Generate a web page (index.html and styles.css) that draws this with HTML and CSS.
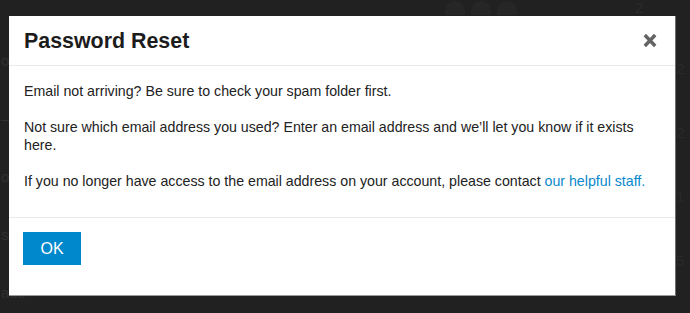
FILE: index.html
```html
<!DOCTYPE html>
<html lang="en">
<head>
<meta charset="utf-8">
<title>Password Reset</title>
<link rel="stylesheet" href="styles.css">
</head>
<body>
  <div class="backdrop">
    <div class="bg-left">
      <span class="bg-word">of</span>
      <span class="bg-word">–</span>
      <span class="bg-word">or</span>
      <span class="bg-word">so</span>
      <span class="bg-word">ads</span>
    </div>
    <div class="bg-top">
      <span class="bg-avatar"></span>
      <span class="bg-avatar"></span>
      <span class="bg-avatar"></span>
      <span class="bg-num">2</span>
    </div>
    <div class="bg-right">
      <span>2</span><span>2</span><span>1</span><span>5</span>
    </div>
  </div>

  <div class="modal" role="dialog" aria-labelledby="modal-title">
    <div class="modal-header">
      <h3 id="modal-title" class="modal-title">Password Reset</h3>
      <button class="modal-close" aria-label="close">
        <svg width="14" height="15" viewBox="0 0 14 15" aria-hidden="true">
          <path d="M1.8 2 L12.2 13 M12.2 2 L1.8 13" stroke="#646464" stroke-width="3.4" stroke-linecap="butt" fill="none"/>
        </svg>
      </button>
    </div>
    <div class="modal-body">
      <p>Email not arriving? Be sure to check your spam folder first.</p>
      <p>Not sure which email address you used? Enter an email address and we’ll let you know if it exists here.</p>
      <p>If you no longer have access to the email address on your account, please contact <a href="#" class="link">our helpful staff.</a></p>
    </div>
    <div class="modal-footer">
      <button class="btn-primary">OK</button>
    </div>
  </div>
</body>
</html>
```

FILE: styles.css
```css
html, body {
  margin: 0;
  padding: 0;
}

body {
  background: #212121;
  font-family: "Liberation Sans", Arial, sans-serif;
  color: #222222;
  width: 690px;
  height: 313px;
  overflow: hidden;
  position: relative;
}

/* faint page content behind the overlay */
.backdrop {
  height: 313px;
  display: grid;
  grid-template-columns: 40px 1fr 14px;
  color: #303030;
  font-size: 15px;
}

.bg-left {
  display: flex;
  flex-direction: column;
  padding-top: 52px;
  gap: 40px;
  padding-left: 1px;
}

.bg-word {
  line-height: 18px;
}

.bg-top {
  display: flex;
  align-items: flex-start;
  gap: 6px;
  padding-left: 405px;
  padding-top: 1px;
}

.bg-avatar {
  width: 20px;
  height: 14px;
  border-radius: 10px 10px 0 0;
  background: #262626;
}

.bg-num {
  margin-left: 112px;
  line-height: 14px;
  color: #2c2c2c;
}

.bg-right {
  display: flex;
  flex-direction: column;
  gap: 46px;
  padding-top: 60px;
  color: #2a2a2a;
  line-height: 18px;
}

/* modal overlay */
.modal {
  position: absolute;
  left: 9px;
  top: 16px;
  width: 667px;
  height: 280px;
  box-sizing: border-box;
  background: #ffffff;
  border-right: 1px solid #6e6e6e;
  border-bottom: 1px solid #9a9a9a;
  display: flex;
  flex-direction: column;
}

.modal-header {
  height: 50px;
  box-sizing: border-box;
  border-bottom: 1px solid #e9e9e9;
  display: flex;
  align-items: center;
  justify-content: space-between;
  padding: 0 18px 0 15px;
}

.modal-title {
  margin: 0;
  font-size: 21.4px;
  font-weight: bold;
  color: #1c1c1c;
  line-height: 26px;
  padding-top: 1px;
}

.modal-close {
  border: 0;
  background: transparent;
  padding: 0;
  width: 14px;
  height: 15px;
  display: flex;
}

.modal-body {
  padding: 16px 15px 9px 15px;
  border-bottom: 1px solid #e9e9e9;
  font-size: 14.2px;
  line-height: 18px;
}

.modal-body p {
  margin: 0 0 18px 0;
}

.link {
  color: #0a88cc;
  text-decoration: none;
}

.modal-footer {
  padding: 14px 14px;
  display: flex;
}

.btn-primary {
  width: 58px;
  height: 33px;
  border: 0;
  background: #0088cc;
  color: #ffffff;
  font-family: "Liberation Sans", Arial, sans-serif;
  font-size: 16px;
  padding: 0;
}
```
